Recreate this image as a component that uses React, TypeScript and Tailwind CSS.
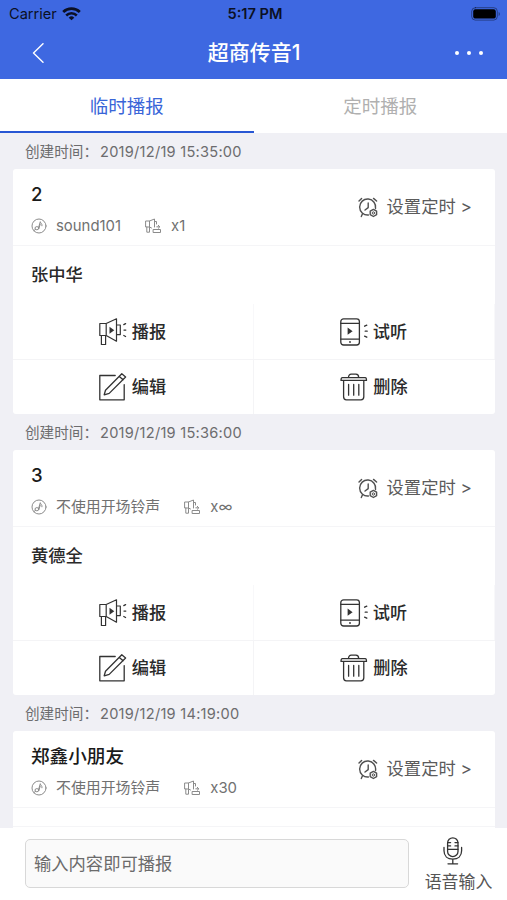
import type { ReactNode } from "react";

interface Broadcast {
  createdAt: string;
  title: string;
  sound: string;
  times: string;
  content?: string;
}

const broadcasts: Broadcast[] = [
  { createdAt: "2019/12/19 15:35:00", title: "2", sound: "sound101", times: "x1", content: "张中华" },
  { createdAt: "2019/12/19 15:36:00", title: "3", sound: "不使用开场铃声", times: "x∞", content: "黄德全" },
  { createdAt: "2019/12/19 14:19:00", title: "郑鑫小朋友", sound: "不使用开场铃声", times: "x30" },
];

function Icon({ className, viewBox, children }: { className: string; viewBox: string; children: ReactNode }) {
  return (
    <svg className={`shrink-0 ${className}`} viewBox={viewBox} fill="none" stroke="currentColor" strokeLinecap="round" strokeLinejoin="round">
      {children}
    </svg>
  );
}

function WifiIcon() {
  return (
    <Icon className="w-[19px] h-[14px]" viewBox="0 0 19 14">
      <path d="M1.2 5a12 12 0 0 1 16.6 0" strokeWidth="2.8" strokeLinecap="butt" />
      <path d="M4.2 8.5a7.5 7.5 0 0 1 10.6 0" strokeWidth="2.5" strokeLinecap="butt" />
      <path d="M9.5 13.3 6.7 10.7a4 4 0 0 1 5.6 0z" fill="currentColor" stroke="none" />
    </Icon>
  );
}

function BatteryIcon() {
  return (
    <Icon className="w-[30px] h-[14px]" viewBox="0 0 30 14">
      <rect x="0.7" y="0.7" width="25.6" height="12.4" rx="3.6" strokeOpacity="0.4" />
      <rect x="2.2" y="2.2" width="22.6" height="9.4" rx="2.2" fill="currentColor" stroke="none" />
      <path d="M27.6 4.9v4c1.8-.7 1.8-3.3 0-4z" fill="currentColor" fillOpacity="0.4" stroke="none" />
    </Icon>
  );
}

function NoteIcon() {
  return (
    <Icon className="w-4 h-4 text-[#8b8b8b]" viewBox="0 0 16 16">
      <circle cx="8" cy="8" r="7" />
      <path d="M7.5 9.8 9.3 3.7c.2 1.7 2.2 2 1.7 4.1" />
      <ellipse cx="5.9" cy="10.2" rx="1.9" ry="1.6" />
      <path d="M3 12.6 4.7 11M9.2 6.2 8 10" />
    </Icon>
  );
}

function RepeatIcon() {
  return (
    <Icon className="w-[17px] h-4 text-[#8b8b8b]" viewBox="0 0 17 16">
      <path d="M1 3h3.5v6H1zM4.5 3 9.500 1v8M4.500 9l2 1M1.800 9v5.200h2.700V9M9.500 3.500h2v2.500" />
      <path d="M8.500 11.500h7v3h-7zM11.800 8.800h2.700M13.300 7.300 14.800 8.800l-1.500 1.500" />
    </Icon>
  );
}

function AlarmIcon() {
  return (
    <Icon className="w-[20px] h-[21px] text-[#505050]" viewBox="0 0 20 21">
      <path d="M10.4 18A8 8 0 1 1 17.5 11.5" strokeWidth="1.4" />
      <path d="M1 4 3.6 1.4M15.5 1.4 18.6 4M10.2 6v4.6L7 13M4.5 16.8 3.3 19.5" strokeWidth="1.4" />
      <path d="m15.4 12.4 3.2 1.8v3.5l-3.2 1.8-3.2-1.8v-3.5z" strokeWidth="1.4" />
      <circle cx="15.4" cy="16" r="1.2" />
    </Icon>
  );
}

function MegaphoneIcon() {
  return (
    <Icon className="w-7 h-7 text-[#333]" viewBox="0 0 28 28">
      <path d="M.8 5.500h6.400v12H.8zM7.200 5.500 17.500.8v22.400L7.200 17.500M2.400 17.500v9h4.200v-9M17.500 7h3.800v9.600h-3.800" strokeWidth="1.2" />
      <path d="m10.500 8.800 4.800 3.500-4.800 3.500z" fill="currentColor" stroke="none" />
      <path d="m24.800 6.600 1.800-1M25 12.100h1.800M24.800 17.500l1.800 1" strokeWidth="1.3" />
    </Icon>
  );
}

function PhoneIcon() {
  return (
    <Icon className="w-7 h-7 text-[#333]" viewBox="0 0 28 28">
      <rect x="0.8" y="0.8" width="18.6" height="26.2" rx="2.8" strokeWidth="1.3" />
      <path d="M.8 5.4h18.6M.8 21.2h18.6" strokeWidth="1.2" />
      <path d="m7.6 9.6 5 3.6-5 3.6z" fill="currentColor" stroke="none" />
      <circle cx="10" cy="24" r="0.9" fill="currentColor" stroke="none" />
      <path d="m24.6 8.2 2.2-1M25.2 13.2h2M24.6 18.2l2.2 1" strokeWidth="1.3" />
    </Icon>
  );
}

function EditIcon() {
  return (
    <Icon className="w-7 h-7 text-[#333]" viewBox="0 0 28 28">
      <path d="M16.2 2.5H.8v24.3h24.4V11.6" strokeWidth="1.3" />
      <path d="m5.2 21.8 1.3-4.6L22.8.8 26.6 4 10.2 20.4zM20.3 3.4l3.8 3.4" strokeWidth="1.3" />
    </Icon>
  );
}

function TrashIcon() {
  return (
    <Icon className="w-7 h-7 text-[#333]" viewBox="0 0 28 28">
      <path d="M2.4 4.6h22.800c.9 0 1.300 1 1.300 2.800H1C1 5.600 1.500 4.600 2.400 4.600zM8.500 4.500c0-2 1-3.300 2.800-3.300h4.600c1.800 0 2.800 1.300 2.800 3.300" strokeWidth="1.3" />
      <path d="M3.600 7.600v16.200c0 2 1 3 2.800 3H21c1.800 0 2.800-1 2.800-3V7.600M8.600 11.500v10.700M13.700 11.500v10.700M18.800 11.500v10.700" strokeWidth="1.3" />
    </Icon>
  );
}

function MicIcon() {
  return (
    <Icon className="w-5 h-7 text-[#333]" viewBox="0 0 20 28">
      <rect x="4.6" y="0.8" width="10.4" height="18.8" rx="5.2" strokeWidth="1.3" />
      <path d="M1 10.500v3.300c0 5.200 3.600 8.400 8.800 8.400s8.800-3.200 8.800-8.400v-3.300M9.800 22.200v4.600M5 26.800h9.600" strokeWidth="1.3" />
      <path d="M4.600 5.600h3M12 5.600h3M4.600 8.900h3M12 8.900h3M4.600 12.300H15" strokeWidth="1.3" />
    </Icon>
  );
}

function Action({ icon, label }: { icon: ReactNode; label: string }) {
  return (
    <button className="flex items-center justify-center gap-[5px] pr-px text-[17.2px] font-medium text-[#2a2a2a]">
      {icon}
      {label}
    </button>
  );
}

function BroadcastCard({ item }: { item: Broadcast }) {
  return (
    <section>
      <p className="h-9 pl-[25px] text-[14.6px] leading-[38px] text-[#6c6c6e]">
        创建时间：<span className="ml-[2px] tracking-[0.25px]">{item.createdAt}</span>
      </p>
      <div className="ml-[13px] mr-3 h-[245px] rounded-[3px] bg-white">
        <div className="flex h-[77px] items-center justify-between border-b border-[#f5f5f7] pl-[18px] pr-[23px]">
          <div className="pt-2">
            <h2 className="h-[30px] text-[18.6px] leading-[28px] font-medium text-[#1a1a1a]">{item.title}</h2>
            <div className="flex h-8 items-center text-[14.9px] text-[#717171]">
              <NoteIcon />
              <span className="ml-[9px]">{item.sound}</span>
              <span className="ml-6 flex items-center gap-[9px]">
                <RepeatIcon />
                {item.times}
              </span>
            </div>
          </div>
          <button className="flex items-center gap-[9px] text-[17.3px] text-[#5b5b5b]">
            <AlarmIcon />
            <span>设置定时 &gt;</span>
          </button>
        </div>
        {item.content ? (
          <>
            <p className="h-[58px] pl-[18px] text-[17.3px] leading-[58px] font-medium text-[#2a2a2a]">{item.content}</p>
            <div className="grid h-[110px] grid-cols-2 grid-rows-2 divide-x divide-[#f8f8fa]">
              <Action icon={<MegaphoneIcon />} label="播报" />
              <Action icon={<PhoneIcon />} label="试听" />
              <div className="grid border-t border-[#f4f4f6]">
                <Action icon={<EditIcon />} label="编辑" />
              </div>
              <div className="grid border-t border-[#f4f4f6]">
                <Action icon={<TrashIcon />} label="删除" />
              </div>
            </div>
          </>
        ) : (
          <div className="h-[19px] border-b border-[#f5f5f7]" />
        )}
      </div>
    </section>
  );
}

export default function App() {
  return (
    <div className="flex h-[900px] w-[507px] flex-col overflow-hidden bg-[#f0f0f5] font-['Inter','Noto_Sans_CJK_SC',sans-serif]">
      <header className="h-[79px] shrink-0 bg-[#3e68e1]">
        <div className="grid h-[28px] grid-cols-3 items-center pl-[9px] pr-[6px] text-[14.6px] text-[#0b1024]">
          <div className="flex items-center gap-[5px]">
            <span className="pt-0.5">Carrier</span>
            <WifiIcon />
          </div>
          <span className="pt-0.5 text-center font-semibold">5:17 PM</span>
          <div className="flex justify-end pb-px text-black">
            <BatteryIcon />
          </div>
        </div>
        <div className="flex h-[49px] items-center justify-between pl-8 pr-6 text-white">
          <Icon className="w-3 h-5" viewBox="0 0 12 20">
            <path d="M11 .7 1.5 10l9.5 9.3" strokeWidth="1.4" />
          </Icon>
          <h1 className="pl-[9px] text-[21px] font-medium whitespace-nowrap">超商传音1</h1>
          <div className="flex justify-end gap-2">
            <i className="size-[4px] rounded-full bg-white" />
            <i className="size-[4px] rounded-full bg-white" />
            <i className="size-[4px] rounded-full bg-white" />
          </div>
        </div>
      </header>

      <nav className="grid h-[54px] shrink-0 grid-cols-2 bg-white text-[18.5px]">
        <button className="border-b-2 border-[#2857d4] pt-1 text-[#3965d8]">临时播报</button>
        <button className="border-b-2 border-white pt-1 text-[#b0b0b0]">定时播报</button>
      </nav>

      <main className="flex-1 overflow-hidden">
        {broadcasts.map((item) => (
          <BroadcastCard key={item.createdAt} item={item} />
        ))}
      </main>

      <footer className="flex h-[72px] shrink-0 items-center bg-white pl-[25px]">
        <input
          className="mb-px h-[49px] w-[384px] rounded-[5px] border-[1.5px] border-[#d8d8d8] bg-[#fafafa] px-2 text-[17.3px] outline-none placeholder:text-[#6b6b6b]"
          placeholder="输入内容即可播报"
        />
        <button className="flex flex-1 flex-col items-center gap-px pt-[7px] pr-[10px] text-[16.9px] leading-[32px] whitespace-nowrap text-[#555]">
          <MicIcon />
          <span className="ml-[11px]">语音输入</span>
        </button>
      </footer>
    </div>
  );
}
